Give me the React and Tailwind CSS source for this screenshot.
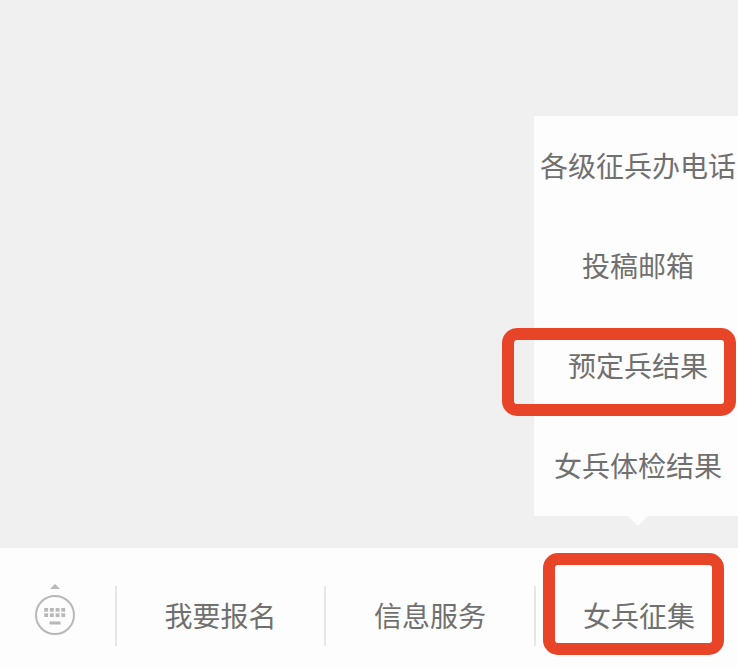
const cjk = "font-['Noto_Sans_CJK_SC','Liberation_Sans',sans-serif]";

function KeyboardIcon() {
  const keys = [];
  for (let row = 0; row < 2; row++) {
    for (let col = 0; col < 4; col++) {
      keys.push(<rect key={`${row}-${col}`} x={11.2 + col * 5.7} y={25 + row * 5.3} width="3.9" height="3.7" />);
    }
  }
  return (
    <svg width="44" height="52" viewBox="0 0 44 52" className="text-[#b8b8b8] mt-[2px]">
      <path d="M17 6 L22 1 L27 6 Z" fill="currentColor" />
      <circle cx="22" cy="32" r="19" fill="none" stroke="currentColor" strokeWidth="2" />
      <g fill="currentColor">
        {keys}
        <rect x="16.5" y="38.5" width="11" height="3" />
      </g>
    </svg>
  );
}

function MenuItem({ label }) {
  return <div className="h-[100px] flex items-center justify-center pl-1 pb-[2px] text-[28px] whitespace-nowrap">{label}</div>;
}

function BarItem({ label, className }) {
  return (
    <div className={`h-full flex items-center justify-center pt-[14px] text-[28px] ${className}`}>
      {label}
    </div>
  );
}

export default function App() {
  return (
    <div className={`relative w-[738px] h-[668px] flex flex-col overflow-hidden bg-[#f0f0f0] text-[#707070] ${cjk}`}>
      <div className="flex-1 relative">
        <div className="absolute left-[534px] top-[116px] w-[204px] bg-[#fdfdfd]">
          <MenuItem label="各级征兵办电话" />
          <MenuItem label="投稿邮箱" />
          <MenuItem label="预定兵结果" />
          <MenuItem label="女兵体检结果" />
          <div className="absolute left-[94px] -bottom-[10px] w-0 h-0 border-x-[10px] border-x-transparent border-t-[10px] border-t-[#fdfdfd]" />
        </div>
      </div>

      <div className="h-[120px] bg-[#fdfdfd] flex items-center">
        <div className="w-[115px] flex justify-center pr-[5px]">
          <KeyboardIcon />
        </div>
        <div className="w-[2px] h-[60px] mt-[16px] bg-[#e6e6e6]" />
        <BarItem label="我要报名" className="w-[207px]" />
        <div className="w-[2px] h-[60px] mt-[16px] bg-[#e6e6e6]" />
        <BarItem label="信息服务" className="w-[208px]" />
        <div className="w-[2px] h-[60px] mt-[16px] bg-[#e6e6e6]" />
        <BarItem label="女兵征集" className="flex-1 pl-1" />
      </div>

      <div className="absolute left-[502px] top-[328px] w-[234px] h-[88px] border-[12px] border-[#e84427] rounded-[15px]" />
      <div className="absolute left-[543px] top-[553px] w-[181px] h-[102px] border-[12px] border-[#e84427] rounded-[15px]" />
    </div>
  );
}
